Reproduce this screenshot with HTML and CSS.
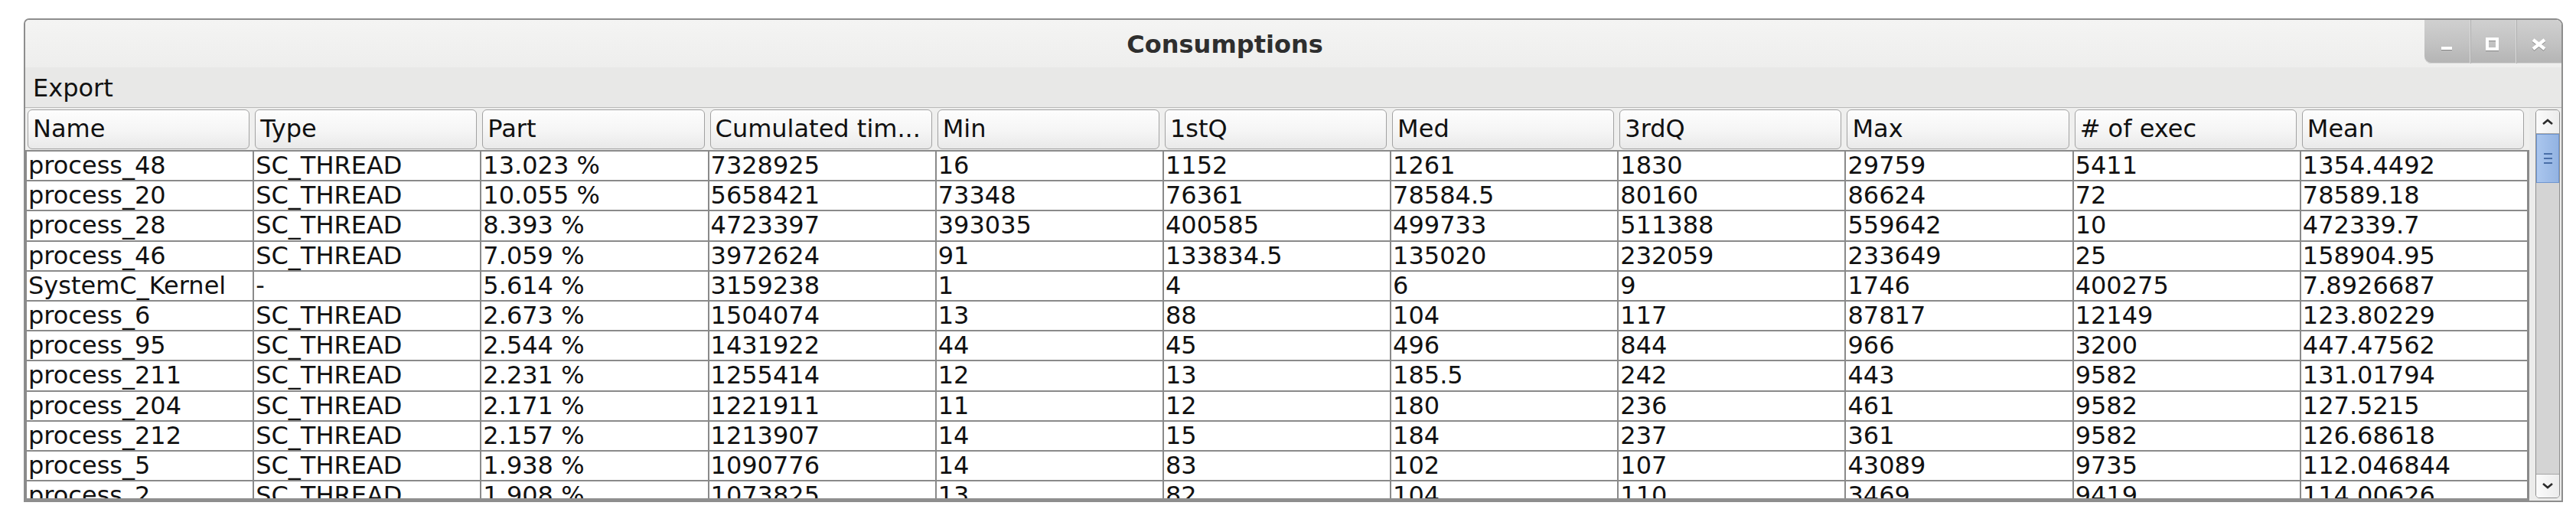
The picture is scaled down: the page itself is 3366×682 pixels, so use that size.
FILE: index.html
```html
<!DOCTYPE html>
<html>
<head>
<meta charset="utf-8">
<title>Consumptions</title>
<link rel="stylesheet" href="styles.css">
</head>
<body>
<div class="window">
  <div class="titlebar">
    <div class="title">Consumptions</div>
    <div class="wbtns">
      <div class="wbtn">
        <svg width="59" height="57" viewBox="0 0 59 57"><rect x="22" y="35" width="14" height="4" fill="#fff"/></svg>
      </div>
      <div class="wbtn">
        <svg width="59" height="57" viewBox="0 0 59 57"><rect x="22" y="25" width="13" height="13" fill="none" stroke="#fff" stroke-width="4"/></svg>
      </div>
      <div class="wbtn">
        <svg width="59" height="57" viewBox="0 0 59 57"><path d="M22 26 L37 38 M37 26 L22 38" stroke="#fff" stroke-width="4.5" fill="none"/></svg>
      </div>
    </div>
  </div>
  <div class="menubar"><span class="menu">Export</span></div>
  <div class="content">
    <div class="pane">
      <div class="thead">
        <div class="th">Name</div>
        <div class="th">Type</div>
        <div class="th">Part</div>
        <div class="th">Cumulated tim...</div>
        <div class="th">Min</div>
        <div class="th">1stQ</div>
        <div class="th">Med</div>
        <div class="th">3rdQ</div>
        <div class="th">Max</div>
        <div class="th"># of exec</div>
        <div class="th">Mean</div>
      </div>
      <div class="tbody">
        <div class="td">process_48</div><div class="td">SC_THREAD</div><div class="td">13.023 %</div><div class="td">7328925</div><div class="td">16</div><div class="td">1152</div><div class="td">1261</div><div class="td">1830</div><div class="td">29759</div><div class="td">5411</div><div class="td">1354.4492</div>
        <div class="td">process_20</div><div class="td">SC_THREAD</div><div class="td">10.055 %</div><div class="td">5658421</div><div class="td">73348</div><div class="td">76361</div><div class="td">78584.5</div><div class="td">80160</div><div class="td">86624</div><div class="td">72</div><div class="td">78589.18</div>
        <div class="td">process_28</div><div class="td">SC_THREAD</div><div class="td">8.393 %</div><div class="td">4723397</div><div class="td">393035</div><div class="td">400585</div><div class="td">499733</div><div class="td">511388</div><div class="td">559642</div><div class="td">10</div><div class="td">472339.7</div>
        <div class="td">process_46</div><div class="td">SC_THREAD</div><div class="td">7.059 %</div><div class="td">3972624</div><div class="td">91</div><div class="td">133834.5</div><div class="td">135020</div><div class="td">232059</div><div class="td">233649</div><div class="td">25</div><div class="td">158904.95</div>
        <div class="td">SystemC_Kernel</div><div class="td">-</div><div class="td">5.614 %</div><div class="td">3159238</div><div class="td">1</div><div class="td">4</div><div class="td">6</div><div class="td">9</div><div class="td">1746</div><div class="td">400275</div><div class="td">7.8926687</div>
        <div class="td">process_6</div><div class="td">SC_THREAD</div><div class="td">2.673 %</div><div class="td">1504074</div><div class="td">13</div><div class="td">88</div><div class="td">104</div><div class="td">117</div><div class="td">87817</div><div class="td">12149</div><div class="td">123.80229</div>
        <div class="td">process_95</div><div class="td">SC_THREAD</div><div class="td">2.544 %</div><div class="td">1431922</div><div class="td">44</div><div class="td">45</div><div class="td">496</div><div class="td">844</div><div class="td">966</div><div class="td">3200</div><div class="td">447.47562</div>
        <div class="td">process_211</div><div class="td">SC_THREAD</div><div class="td">2.231 %</div><div class="td">1255414</div><div class="td">12</div><div class="td">13</div><div class="td">185.5</div><div class="td">242</div><div class="td">443</div><div class="td">9582</div><div class="td">131.01794</div>
        <div class="td">process_204</div><div class="td">SC_THREAD</div><div class="td">2.171 %</div><div class="td">1221911</div><div class="td">11</div><div class="td">12</div><div class="td">180</div><div class="td">236</div><div class="td">461</div><div class="td">9582</div><div class="td">127.5215</div>
        <div class="td">process_212</div><div class="td">SC_THREAD</div><div class="td">2.157 %</div><div class="td">1213907</div><div class="td">14</div><div class="td">15</div><div class="td">184</div><div class="td">237</div><div class="td">361</div><div class="td">9582</div><div class="td">126.68618</div>
        <div class="td">process_5</div><div class="td">SC_THREAD</div><div class="td">1.938 %</div><div class="td">1090776</div><div class="td">14</div><div class="td">83</div><div class="td">102</div><div class="td">107</div><div class="td">43089</div><div class="td">9735</div><div class="td">112.046844</div>
        <div class="td">process_2</div><div class="td">SC_THREAD</div><div class="td">1.908 %</div><div class="td">1073825</div><div class="td">13</div><div class="td">82</div><div class="td">104</div><div class="td">110</div><div class="td">3469</div><div class="td">9419</div><div class="td">114.00626</div>
      </div>
    </div>
    <div class="vscroll">
      <div class="sb-btn sb-up">
        <svg width="16" height="10" viewBox="0 0 16 10"><path d="M2 8 L8 3 L14 8" fill="none" stroke="#2b2b2b" stroke-width="2.6"/></svg>
      </div>
      <div class="thumb">
        <span class="grip"></span><span class="grip"></span><span class="grip"></span>
      </div>
      <div class="track"></div>
      <div class="sb-btn sb-down">
        <svg width="16" height="10" viewBox="0 0 16 10"><path d="M2 2 L8 7 L14 2" fill="none" stroke="#2b2b2b" stroke-width="2.6"/></svg>
      </div>
    </div>
  </div>
</div>
</body>
</html>
```

FILE: styles.css
```css
html, body {
  margin: 0;
  padding: 0;
  background: #ffffff;
}

body {
  font-family: "DejaVu Sans", "Noto Sans", sans-serif;
  font-size: 32px;
  color: #111;
}

.window {
  margin: 24px 0 0 31px;
  width: 3318px;
  height: 632px;
  box-sizing: border-box;
  border: 2px solid #8d8d8d;
  border-radius: 7px 9px 0 0;
  background: #e9e9e8;
  display: flex;
  flex-direction: column;
  overflow: hidden;
}

.titlebar {
  height: 62px;
  flex: none;
  display: flex;
  background: linear-gradient(#f4f4f3, #eeeeed);
}

.title {
  flex: 1;
  text-align: center;
  font-weight: bold;
  line-height: 37px;
  padding-top: 14px;
  color: #2e2e2e;
}

.wbtns {
  display: flex;
  height: 57px;
  border-bottom-left-radius: 9px;
  overflow: hidden;
  background: linear-gradient(#d0d0d0, #c2c2c2 55%, #b4b4b4);
  box-shadow: inset 0 -1px 0 #d8d8d8;
}

.wbtn {
  width: 59px;
  height: 57px;
  border-left: 1px solid #dadada;
  box-shadow: inset 1px 0 0 #b0b0b0;
}

.wbtn:first-child {
  border-left: none;
  box-shadow: none;
}

.wbtn svg {
  display: block;
  filter: drop-shadow(0 1px 0 rgba(60, 60, 60, 0.45));
}

.menubar {
  height: 52px;
  flex: none;
  box-sizing: border-box;
  padding: 9px 0 0 10px;
  line-height: 37px;
  background: #e8e8e7;
}

.content {
  flex: 1;
  display: flex;
  min-height: 0;
  border-top: 1px solid #b9b9b9;
  background: #ececeb;
}

.pane {
  width: 3272px;
  flex: none;
  display: flex;
  flex-direction: column;
  min-height: 0;
}

.thead {
  height: 55px;
  flex: none;
  box-sizing: border-box;
  padding: 2px 3px 0 2px;
  display: grid;
  grid-template-columns: repeat(11, 1fr);
  column-gap: 2px;
  background: #efefee;
}

.th {
  height: 52px;
  box-sizing: border-box;
  margin: 0 4px 0 1px;
  border: 1px solid #a2a2a2;
  border-radius: 6px;
  background: linear-gradient(#fdfdfd, #f5f5f5 55%, #e9e9e9);
  padding: 6px 0 0 6px;
  line-height: 37px;
  white-space: nowrap;
  overflow: hidden;
}

.tbody {
  flex: 1;
  min-height: 0;
  box-sizing: border-box;
  display: grid;
  grid-template-columns: repeat(11, 1fr);
  grid-auto-rows: 37.2px;
  gap: 2px;
  padding: 2px 3px 0 2px;
  background: #8a8a8a;
  border-bottom: 3px solid #8f8f8f;
  overflow: hidden;
}

.td {
  background: #fff;
  padding: 0 0 0 2px;
  line-height: 37px;
  white-space: nowrap;
}

.vscroll {
  width: 32px;
  flex: none;
  margin: 2px 2px 3px 8px;
  box-sizing: border-box;
  border: 1px solid #8f8f8f;
  border-radius: 5px;
  background: #d4d4d4;
  display: flex;
  flex-direction: column;
  overflow: hidden;
}

.sb-btn {
  height: 30px;
  flex: none;
  background: linear-gradient(to right, #fbfbfb, #ececec);
  display: flex;
  align-items: center;
  justify-content: center;
}

.sb-up {
  border-bottom: 1px solid #a6a6a6;
}

.sb-down {
  border-top: 1px solid #a6a6a6;
}

.thumb {
  height: 64px;
  flex: none;
  box-sizing: border-box;
  border: 1px solid #6f96d0;
  background: linear-gradient(to right, #aac6ee, #93b3e2);
  display: flex;
  flex-direction: column;
  align-items: center;
  justify-content: center;
  gap: 4px;
}

.grip {
  width: 11px;
  height: 2px;
  background: #4a6fa8;
}

.track {
  flex: 1;
}
```
